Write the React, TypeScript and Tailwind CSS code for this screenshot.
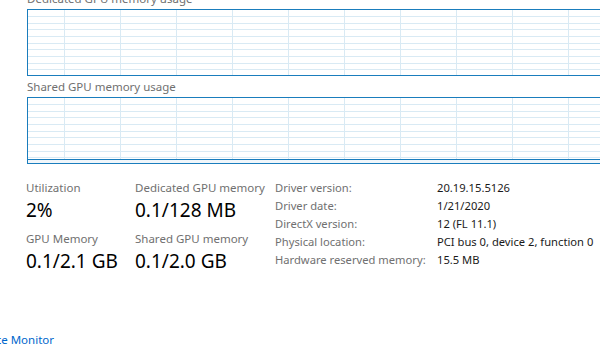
import React from 'react';

const GRID_X = [36, 92, 148, 204, 260, 316, 372, 428, 484, 540, 596];
const GRID_Y = [6, 13, 19, 26, 33, 39, 46, 53, 59];

const UsageChart = ({ title, level }: { title: string; level?: number }) => (
  <div className="flex flex-col">
    <div className="text-[11.5px] leading-[16px] text-[#707070] h-[16px] whitespace-nowrap">{title}</div>
    <div className="mt-[2px] w-[640px] h-[67px] bg-[#1a7dbd] p-px">
      <svg width="638" height="65" className="block bg-white">
        {GRID_Y.map((y) => (
          <line key={'h' + y} x1="0" x2="638" y1={y + 0.5} y2={y + 0.5} stroke="#d9eaf4" strokeWidth="1" />
        ))}
        {GRID_X.map((x) => (
          <line key={'v' + x} x1={x + 0.5} x2={x + 0.5} y1="0" y2="65" stroke="#d9eaf4" strokeWidth="1" />
        ))}
        {level !== undefined && (
          <>
            <rect x="0" y={level} width="638" height={65 - level} fill="#f1f6fa" />
            <line x1="0" x2="638" y1={level + 0.5} y2={level + 0.5} stroke="#1a7dbd" strokeWidth="1" />
          </>
        )}
      </svg>
    </div>
  </div>
);

const Stat = ({ label, value }: { label: string; value: string }) => (
  <div className="flex flex-col">
    <div className="text-[11.5px] leading-[16px] text-[#707070] whitespace-nowrap">{label}</div>
    <div className="mt-[3px] text-[19px] leading-[22px] text-black whitespace-nowrap">{value}</div>
  </div>
);

const details: [string, string][] = [
  ['Driver version:', '20.19.15.5126'],
  ['Driver date:', '1/21/2020'],
  ['DirectX version:', '12 (FL 11.1)'],
  ['Physical location:', 'PCI bus 0, device 2, function 0'],
  ['Hardware reserved memory:', '15.5 MB'],
];

export default function App() {
  return (
    <div
      className="w-[600px] h-[360px] bg-white overflow-hidden flex flex-col"
      style={{ fontFamily: '"Noto Sans", "Open Sans", sans-serif' }}
    >
      <div className="pl-[27px] -mt-[9px] flex flex-col gap-[3px]">
        <UsageChart title="Dedicated GPU memory usage" />
        <UsageChart title="Shared GPU memory usage" level={61} />
      </div>

      <div className="flex pl-[26px] mt-[16px]">
        <div className="w-[109px] shrink-0 flex flex-col gap-[10px]">
          <Stat label="Utilization" value="2%" />
          <Stat label="GPU Memory" value="0.1/2.1 GB" />
        </div>
        <div className="w-[140px] shrink-0 flex flex-col gap-[10px]">
          <Stat label="Dedicated GPU memory" value="0.1/128 MB" />
          <Stat label="Shared GPU memory" value="0.1/2.0 GB" />
        </div>
        <div className="grid grid-cols-[162px_auto] auto-rows-[18px] text-[11.2px] leading-[18px] -mt-[1px] shrink-0">
          {details.map(([k, v]) => (
            <React.Fragment key={k}>
              <div className="text-[#707070] whitespace-nowrap">{k}</div>
              <div className="text-[#1a1a1a] whitespace-nowrap">{v}</div>
            </React.Fragment>
          ))}
        </div>
      </div>

      <div className="mt-auto mb-[12px] w-[54px] flex justify-end">
        <div className="text-[11.5px] leading-[16px] text-[#0066cc] whitespace-nowrap shrink-0">Open Resource Monitor</div>
      </div>
    </div>
  );
}
